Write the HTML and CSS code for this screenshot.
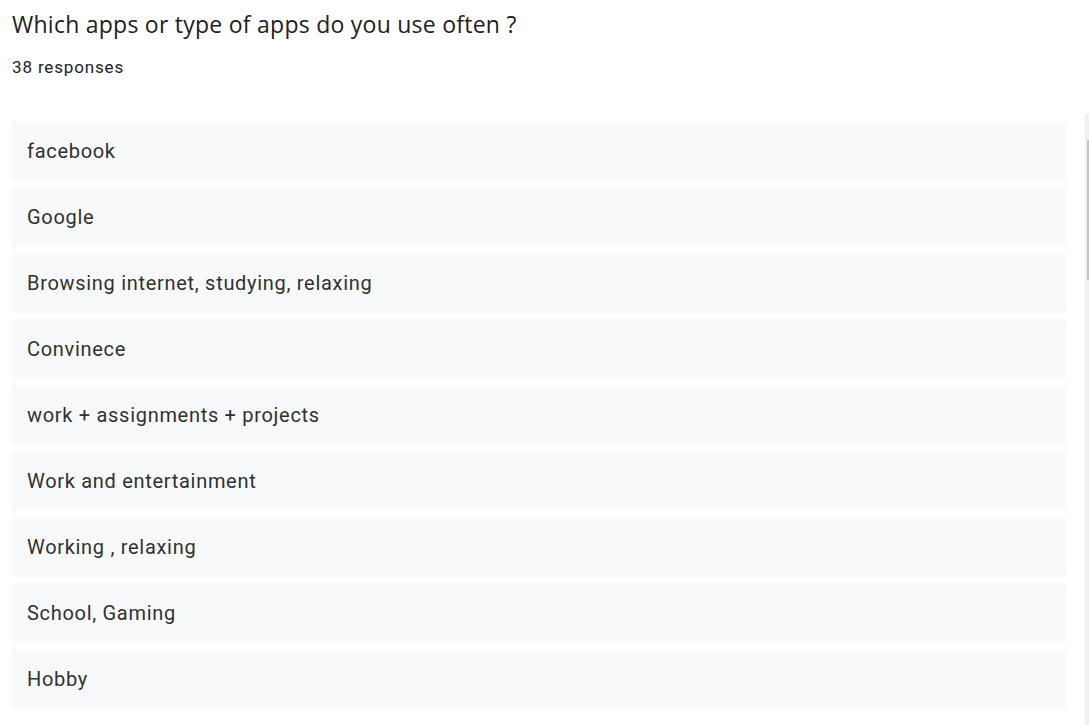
FILE: index.html
```html
<!DOCTYPE html>
<html>
<head>
<meta charset="utf-8">
<link rel="stylesheet" href="styles.css">
</head>
<body>
<div class="page">
  <header class="head">
    <h1 class="title">Which apps or type of apps do you use often ?</h1>
    <div class="count">38 responses</div>
  </header>
  <div class="list">
    <div class="row">facebook</div>
    <div class="row">Google</div>
    <div class="row">Browsing internet, studying, relaxing</div>
    <div class="row">Convinece</div>
    <div class="row">work + assignments + projects</div>
    <div class="row">Work and entertainment</div>
    <div class="row">Working , relaxing</div>
    <div class="row">School, Gaming</div>
    <div class="row">Hobby</div>
  </div>
  <div class="scroll-track"><div class="scroll-thumb"></div></div>
</div>
</body>
</html>
```
FILE: styles.css
```css
html, body {
  margin: 0;
  padding: 0;
  background: #ffffff;
  overflow: hidden;
}
.page {
  width: 1089px;
  height: 725px;
  overflow: hidden;
  position: relative;
  padding: 0 22px 0 12px;
  box-sizing: border-box;
}
.head {
  padding-top: 9px;
  height: 121px;
  box-sizing: border-box;
}
.title {
  margin: 0;
  font-family: "Open Sans", sans-serif;
  font-weight: 400;
  font-size: 23px;
  line-height: 30px;
  letter-spacing: 0.25px;
  color: #202124;
}
.count {
  margin-top: 16px;
  font-family: Roboto, sans-serif;
  font-size: 17px;
  line-height: 24px;
  letter-spacing: 0.85px;
  color: #202124;
}
.list {
  display: flex;
  flex-direction: column;
  gap: 6px;
}
.row {
  height: 60px;
  box-sizing: border-box;
  background: #f8f9fa;
  border-radius: 4px;
  padding: 0 15px;
  display: flex;
  align-items: center;
  font-family: Roboto, sans-serif;
  font-size: 20px;
  color: #303134;
  letter-spacing: 0.7px;
}
.scroll-track {
  position: absolute;
  left: 1085px;
  top: 114px;
  width: 4px;
  height: 611px;
  background: #f1f1f1;
}
.scroll-thumb {
  position: absolute;
  left: 2px;
  top: 26px;
  width: 2px;
  height: 140px;
  background: #c1c1c1;
}
```
